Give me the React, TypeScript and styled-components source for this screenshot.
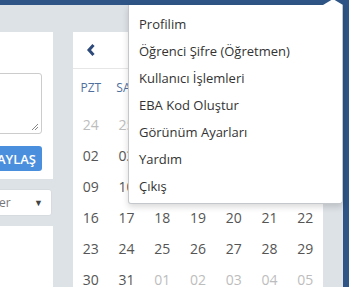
import React from "react";
import styled, { createGlobalStyle } from "styled-components";

const Global = createGlobalStyle`
  html, body { margin: 0; padding: 0; }
  body { font-family: "Open Sans", "Noto Sans", sans-serif; background: #dde2e6; overflow: hidden; }
  * { box-sizing: border-box; }
`;

const Page = styled.div`
  display: flex;
  width: 349px;
  height: 287px;
  overflow: hidden;
  position: relative;
`;

const Content = styled.div`
  flex: 1;
  display: flex;
  flex-direction: column;
  min-width: 0;
`;

const TopBar = styled.div`
  height: 5px;
  background: #2e5585;
  flex: none;
`;

const SideStrip = styled.div`
  width: 6px;
  background: #2e5585;
  flex: none;
`;

const Body = styled.div`
  flex: 1;
  display: flex;
  align-items: flex-start;
  gap: 20px;
  padding-top: 27px;
  overflow: hidden;
`;

const LeftCol = styled.div`
  width: 53px;
  flex: none;
  display: flex;
  flex-direction: column;
  align-items: flex-end;
  gap: 10px;
  overflow: hidden;
`;

const Card = styled.div<{ $height?: number }>`
  width: 220px;
  flex: none;
  background: #fff;
  ${(p) => (p.$height ? `height: ${p.$height}px;` : "")}
`;

const PostCard = styled(Card)`
  display: flex;
  flex-direction: column;
  align-items: flex-end;
  padding: 41px 11px 8px 10px;
  gap: 12px;
`;

const TextArea = styled.div`
  position: relative;
  width: 100%;
  height: 61px;
  border: 1px solid #ccc;
  border-radius: 3px;
  background: #fff;
`;

const Grip = styled.svg`
  position: absolute;
  right: 2px;
  bottom: 2px;
`;

const ShareButton = styled.button`
  height: 25px;
  border: none;
  border-radius: 3px;
  background: #4a8fde;
  color: #fff;
  font-family: inherit;
  font-weight: 600;
  font-size: 13px;
  padding: 0 6px 0 10px;
  letter-spacing: 0;
`;

const Select = styled.div`
  width: 124px;
  flex: none;
  height: 27px;
  background: #fff;
  border: 1px solid #d6dbe0;
  border-radius: 3px;
  display: flex;
  align-items: center;
  justify-content: space-between;
  padding: 0 8px 0 10px;
  margin-right: 1px;
  font-size: 12px;
  color: #777;
  white-space: nowrap;
`;

const Caret = styled.span`
  font-size: 9px;
  color: #444;
`;

const Calendar = styled.div`
  width: 250px;
  flex: none;
  background: #fff;
  display: flex;
  flex-direction: column;
`;

const CalHeader = styled.div`
  flex: none;
  height: 37px;
  border-bottom: 1px solid #e6e6e6;
  display: flex;
  align-items: center;
  padding-left: 13px;
`;

const Grid = styled.div`
  flex: none;
  display: grid;
  grid-template-columns: repeat(7, 1fr);
`;

const DayName = styled.div`
  height: 36px;
  display: flex;
  align-items: center;
  justify-content: center;
  font-size: 12px;
  color: #4f6f9c;
`;

const Dates = styled(Grid)`
  padding-top: 4px;
`;

const DateCell = styled.div<{ $muted?: boolean }>`
  height: 31px;
  display: flex;
  align-items: center;
  justify-content: center;
  font-size: 14px;
  color: ${(p) => (p.$muted ? "#bdbdbd" : "#555")};
`;

const Menu = styled.div`
  position: absolute;
  left: 128px;
  top: 5px;
  width: 215px;
  background: #fff;
  border: 1px solid #c4c8cc;
  border-top: none;
  border-radius: 0 0 3px 3px;
  box-shadow: 0 3px 6px rgba(0, 0, 0, 0.15);
  padding: 5px 0 4px;
  z-index: 10;
`;

const MenuArrow = styled.span`
  position: absolute;
  right: -1px;
  top: -6px;
  width: 0;
  height: 0;
  border-left: 10px solid transparent;
  border-right: 10px solid transparent;
  border-bottom: 6px solid #fff;
`;

const MenuItem = styled.div`
  height: 27px;
  display: flex;
  align-items: center;
  padding-left: 10px;
  font-size: 13px;
  color: #333;
`;

const dayNames = ["PZT", "SAL", "ÇAR", "PER", "CUM", "CMT", "PAZ"];

const rows: [string, boolean][][] = [
  [["24", true], ["25", true], ["26", true], ["27", true], ["28", true], ["29", true], ["01", false]],
  [["02", false], ["03", false], ["04", false], ["05", false], ["06", false], ["07", false], ["08", false]],
  [["09", false], ["10", false], ["11", false], ["12", false], ["13", false], ["14", false], ["15", false]],
  [["16", false], ["17", false], ["18", false], ["19", false], ["20", false], ["21", false], ["22", false]],
  [["23", false], ["24", false], ["25", false], ["26", false], ["27", false], ["28", false], ["29", false]],
  [["30", false], ["31", false], ["01", true], ["02", true], ["03", true], ["04", true], ["05", true]],
];

const menuItems = [
  "Profilim",
  "Öğrenci Şifre (Öğretmen)",
  "Kullanıcı İşlemleri",
  "EBA Kod Oluştur",
  "Görünüm Ayarları",
  "Yardım",
  "Çıkış",
];

export default function App() {
  return (
    <>
      <Global />
      <Page>
        <Content>
          <TopBar />
          <Body>
            <LeftCol>
              <PostCard>
                <TextArea>
                  <Grip width="8" height="8" viewBox="0 0 8 8">
                    <path d="M1 7 L7 1 M4 7 L7 4" stroke="#888" strokeWidth="1" />
                  </Grip>
                </TextArea>
                <ShareButton>PAYLAŞ</ShareButton>
              </PostCard>
              <Select>
                <span>Öğretmenler</span>
                <Caret>▼</Caret>
              </Select>
              <Card $height={80} />
            </LeftCol>
            <Calendar>
              <CalHeader>
                <svg width="10" height="14" viewBox="0 0 10 14">
                  <path d="M7.5 2 L3 7 L7.5 12" fill="none" stroke="#2e4a7a" strokeWidth="3" />
                </svg>
              </CalHeader>
              <Grid>
                {dayNames.map((d) => (
                  <DayName key={d}>{d}</DayName>
                ))}
              </Grid>
              <Dates>
                {rows.flat().map(([d, m], i) => (
                  <DateCell key={i} $muted={m}>
                    {d}
                  </DateCell>
                ))}
              </Dates>
            </Calendar>
          </Body>
        </Content>
        <SideStrip />
        <Menu>
          <MenuArrow />
          {menuItems.map((m) => (
            <MenuItem key={m}>{m}</MenuItem>
          ))}
        </Menu>
      </Page>
    </>
  );
}
